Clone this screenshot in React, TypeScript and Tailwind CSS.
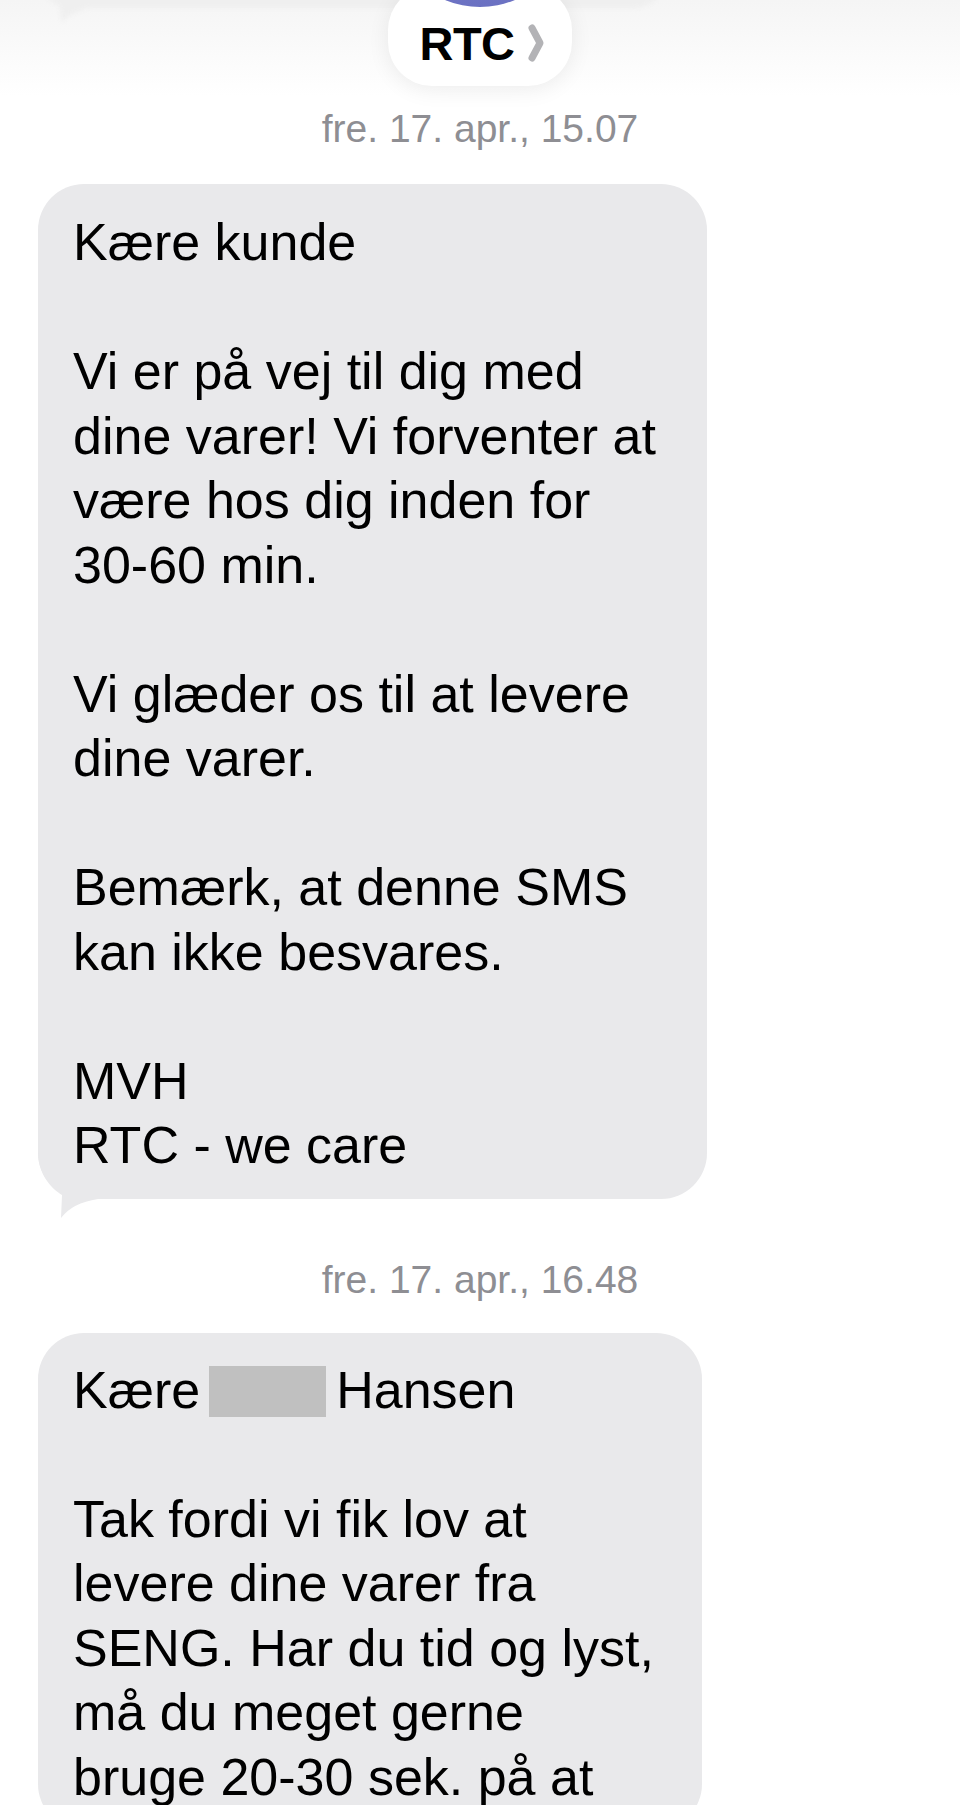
import React from 'react'

const first = [
  'Kære kunde',
  '',
  'Vi er på vej til dig med',
  'dine varer! Vi forventer at',
  'være hos dig inden for',
  '30-60 min.',
  '',
  'Vi glæder os til at levere',
  'dine varer.',
  '',
  'Bemærk, at denne SMS',
  'kan ikke besvares.',
  '',
  'MVH',
  'RTC - we care',
]

const second = [
  '',
  'Tak fordi vi fik lov at',
  'levere dine varer fra',
  'SENG. Har du tid og lyst,',
  'må du meget gerne',
  'bruge 20-30 sek. på at',
]

const Tail = ({ color }: { color: string }) => (
  <svg className="absolute left-0 bottom-[-19px]" width="72" height="67" viewBox="0 0 72 67">
    <path d="M0,0 C0,24 14,38 24,44 L23,67 Q34,52 60,48 L72,48 L72,0 Z" fill={color} />
  </svg>
)

const Stamp = ({ text, className }: { text: string; className: string }) => (
  <div className={`text-center text-[39px] leading-[46px] text-[#8e8e93] ${className}`}>{text}</div>
)

const Line = ({ children }: { children?: React.ReactNode }) => (
  <div className="min-h-[64.5px] whitespace-nowrap">{children}</div>
)

export default function App() {
  return (
    <div className="h-[1805px] overflow-hidden bg-white font-['Liberation_Sans',Arial,sans-serif] text-black">
      {/* translucent nav bar */}
      <div className="relative h-[96px] bg-gradient-to-b from-[#f5f5f5] via-[#fafafa] to-white flex justify-center">
        <div className="absolute left-[38px] top-[-60px] w-[629px] h-[68px] rounded-[46px] bg-[#efefef] blur-[2px]">
          <svg className="absolute left-[20px] bottom-[-18px]" width="60" height="30" viewBox="0 0 60 30">
            <path d="M0,0 L4,26 Q14,14 40,10 L60,10 L60,0 Z" fill="#efefef" />
          </svg>
        </div>
        <div className="relative -mt-[14px] h-[100px] w-[184px] rounded-[44px] bg-white shadow-[0_4px_22px_rgba(0,0,0,0.07)] flex items-start justify-center pt-[34px] pl-[4px]">
          <div className="absolute left-1/2 -translate-x-1/2 top-[-159px] w-[180px] h-[180px] rounded-full bg-gradient-to-b from-[#8a90d6] to-[#6b71c2]" />
          <span className="text-[47px] leading-[47px] font-bold tracking-[-0.5px]">RTC</span>
          <svg className="ml-[12px] mt-[3px]" width="18" height="40" viewBox="0 0 18 40">
            <path d="M5,5 L13,20 L5,35" fill="none" stroke="#b3b3b6" strokeWidth="7" strokeLinecap="round" strokeLinejoin="round" />
          </svg>
        </div>
      </div>

      <Stamp text="fre. 17. apr., 15.07" className="mt-[10px]" />

      <div className="relative ml-[38px] mt-[32px] w-[669px] rounded-[46px] bg-[#e9e9eb] pl-[35px] pt-[26px] pb-[21px] text-[52px] leading-[64.5px]">
        <Tail color="#e9e9eb" />
        <div className="relative">
          {first.map((l, i) => (
            <Line key={i}>{l}</Line>
          ))}
        </div>
      </div>

      <Stamp text="fre. 17. apr., 16.48" className="mt-[58px]" />

      <div className="relative ml-[38px] mt-[30px] w-[664px] rounded-[46px] bg-[#e9e9eb] pl-[35px] pt-[25px] pb-[21px] text-[52px] leading-[64.5px]">
        <Line>
          Kære
          <span className="inline-block ml-[9px] mr-[10px] w-[117px] h-[51px] bg-[#c0c0c0] align-[-9px]" />
          Hansen
        </Line>
        {second.map((l, i) => (
          <Line key={i}>{l}</Line>
        ))}
      </div>
    </div>
  )
}
